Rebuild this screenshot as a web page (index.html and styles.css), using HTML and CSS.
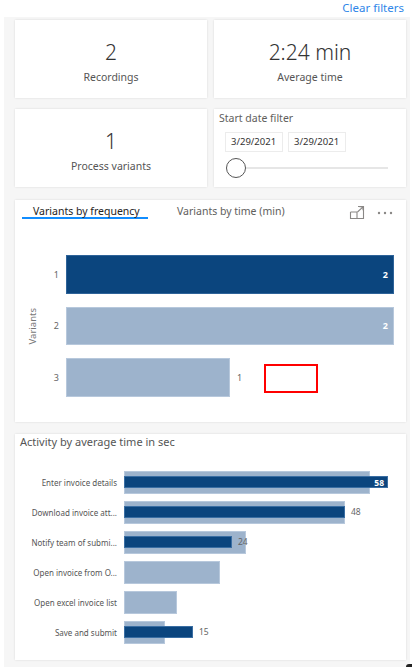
FILE: index.html
```html
<!DOCTYPE html>
<html>
<head>
<meta charset="utf-8">
<link rel="stylesheet" href="styles.css">
</head>
<body>
<div class="topbar"><span class="clear">Clear filters</span></div>
<div class="board">
  <div class="grid">
    <div class="card kpi"><div class="kval">2</div><div class="klabel">Recordings</div></div>
    <div class="card kpi"><div class="kval">2:24 min</div><div class="klabel">Average time</div></div>
    <div class="card kpi"><div class="kval">1</div><div class="klabel">Process variants</div></div>
    <div class="card filter">
      <div class="ftitle">Start date filter</div>
      <div class="dates"><div class="date">3/29/2021</div><div class="date">3/29/2021</div></div>
      <div class="slider"><div class="knob"></div><div class="track"></div></div>
    </div>
  </div>

  <div class="card variants">
    <div class="tabs">
      <div class="tab active">Variants by frequency</div>
      <div class="tab">Variants by time (min)</div>
      <div class="icons">
        <svg width="16" height="15" viewBox="0 0 16 15" fill="none" stroke="#8a8886" stroke-width="1.1">
          <path d="M9 1.5H14.5V13.5H1.5V7"/>
          <path d="M1.5 7H8V13.5"/>
          <path d="M8.5 7L14 1.8M10.5 1.8H14V5.3"/>
        </svg>
        <svg width="16" height="4" viewBox="0 0 16 4" fill="#8a8886">
          <circle cx="2" cy="2" r="1.2"/><circle cx="8" cy="2" r="1.2"/><circle cx="14" cy="2" r="1.2"/>
        </svg>
      </div>
    </div>
    <div class="vchart">
      <div class="vaxis"><span>Variants</span></div>
      <div class="vrows">
        <div class="vrow"><div class="vcat">1</div><div class="vplot"><div class="vbar dark full"><span class="inlabel">2</span></div></div></div>
        <div class="vrow"><div class="vcat">2</div><div class="vplot"><div class="vbar light full"><span class="inlabel">2</span></div></div></div>
        <div class="vrow"><div class="vcat">3</div><div class="vplot"><div class="vbar light half"></div><span class="outlabel">1</span></div></div>
      </div>
    </div>
    <div class="redbox"></div>
  </div>

  <div class="card activity">
    <div class="atitle">Activity by average time in sec</div>
    <div class="arows">
      <div class="arow"><div class="alabel">Enter invoice details</div><div class="aplot"><div class="lbar" style="width:246px"></div><div class="dbar" style="width:264px"><span class="din">58</span></div></div></div>
      <div class="arow"><div class="alabel">Download invoice att...</div><div class="aplot"><div class="lbar" style="width:221px"></div><div class="dbar" style="width:221px"></div><span class="dout" style="left:227px">48</span></div></div>
      <div class="arow"><div class="alabel">Notify team of submi...</div><div class="aplot"><div class="lbar" style="width:122px"></div><div class="dbar" style="width:108px"></div><span class="dout" style="left:114px">24</span></div></div>
      <div class="arow"><div class="alabel">Open invoice from O...</div><div class="aplot"><div class="lbar" style="width:96px"></div></div></div>
      <div class="arow"><div class="alabel">Open excel invoice list</div><div class="aplot"><div class="lbar" style="width:53px"></div></div></div>
      <div class="arow"><div class="alabel">Save and submit</div><div class="aplot"><div class="lbar" style="width:41px"></div><div class="dbar" style="width:69px"></div><span class="dout" style="left:75px">15</span></div></div>
    </div>
  </div>
</div>
<div class="corner"></div>
</body>
</html>
```
FILE: styles.css
```css
* { box-sizing: border-box; }
html, body { margin: 0; padding: 0; background: #fff; }
body {
  width: 412px;
  height: 667px;
  overflow: hidden;
  font-family: "Noto Sans", "Open Sans", sans-serif;
  color: #252423;
  position: relative;
}
.topbar {
  height: 17px;
  text-align: right;
  padding-right: 8px;
  line-height: 13px;
}
.clear {
  font-size: 11.5px;
  color: #2f86e8;
}
.board {
  margin: 0 2px 0 4px;
  background: #f6f6f6;
  padding: 3px 4px 8px 11px;
  height: 650px;
}
.card {
  background: #fff;
  box-shadow: 0 0 2px rgba(0,0,0,0.12);
}
.grid {
  display: grid;
  grid-template-columns: 192px 192px;
  column-gap: 7px;
  row-gap: 11px;
}
.kpi {
  height: 78px;
  display: flex;
  flex-direction: column;
  align-items: center;
  justify-content: center;
}
.kval {
  font-size: 21px;
  line-height: 26px;
  color: #333;
  font-weight: 300;
  margin-top: 4px;
}
.klabel {
  font-size: 10.5px;
  color: #555;
  margin-top: 5px;
}
.filter {
  height: 78px;
  padding: 2px 0 0 5px;
}
.ftitle {
  font-size: 10.5px;
  color: #605e5c;
  line-height: 15px;
}
.dates {
  display: flex;
  gap: 5px;
  margin: 6px 0 0 6px;
}
.date {
  width: 58px;
  height: 20px;
  border: 1px solid #ececec;
  font-size: 9.5px;
  line-height: 18px;
  padding-left: 5px;
  color: #333;
}
.slider {
  display: flex;
  align-items: center;
  margin: 6px 0 0 7px;
}
.knob {
  width: 20px;
  height: 20px;
  border-radius: 50%;
  border: 1.5px solid #555;
  background: #fff;
}
.track {
  width: 142px;
  height: 2px;
  background: #e6e6e6;
}
.variants {
  margin-top: 13px;
  height: 222px;
  position: relative;
}
.tabs {
  display: flex;
  align-items: flex-start;
  padding: 4px 0 0 7px;
  height: 21px;
}
.tab {
  font-size: 10.5px;
  color: #605e5c;
  line-height: 14px;
}
.tab.active {
  color: #252423;
  width: 126px;
  padding-left: 11px;
  height: 15px;
  border-bottom: 2px solid #118dff;
}
.tab:not(.active) { margin-left: 29px; }
.icons {
  margin-left: auto;
  margin-right: 13px;
  display: flex;
  align-items: center;
  gap: 12px;
  margin-top: 1px;
}
.vchart {
  display: flex;
  align-items: center;
  margin-top: 34px;
}
.vaxis {
  width: 34px;
  display: flex;
  justify-content: center;
}
.vaxis span {
  writing-mode: vertical-rl;
  transform: rotate(180deg);
  font-size: 9.5px;
  color: #777;
}
.vrows {
  display: flex;
  flex-direction: column;
  gap: 13px;
  flex: 1;
}
.vrow {
  display: flex;
  align-items: center;
  height: 38.5px;
}
.vcat {
  width: 17px;
  padding-right: 7px;
  text-align: right;
  font-size: 9px;
  color: #666;
}
.vplot {
  display: flex;
  align-items: center;
  height: 100%;
}
.vbar {
  height: 100%;
  display: flex;
  align-items: center;
  justify-content: flex-end;
}
.vbar.full { width: 328px; }
.vbar.half { width: 164px; }
.dark { background: #0b457e; border: 1px solid #2e6399; }
.light { background: #9db3cc; border: 1px solid #b7c8dc; }
.inlabel {
  color: #fff;
  font-size: 9px;
  font-weight: 700;
  padding-right: 5px;
}
.outlabel {
  font-size: 9px;
  color: #666;
  margin-left: 7px;
}
.redbox {
  position: absolute;
  left: 249px;
  top: 164px;
  width: 54px;
  height: 29px;
  border: 2px solid #ff0000;
}
.activity {
  margin-top: 12px;
  height: 226px;
  padding: 1px 0 0 5px;
}
.atitle {
  font-size: 11px;
  color: #555;
  line-height: 14px;
}
.arows {
  margin-top: 22px;
  display: flex;
  flex-direction: column;
  gap: 7px;
}
.arow {
  display: flex;
  align-items: center;
  height: 23px;
}
.alabel {
  width: 97px;
  text-align: right;
  font-size: 8px;
  color: #555;
  white-space: nowrap;
}
.aplot {
  margin-left: 7px;
  position: relative;
  height: 23px;
  flex: 1;
}
.lbar {
  height: 23px;
  background: #9db3cc;
  border: 1px solid #b7c8dc;
}
.dbar {
  position: absolute;
  left: 0;
  top: 5px;
  height: 12px;
  background: #0b457e;
  border: 1px solid #3a6ea3;
  display: flex;
  align-items: center;
  justify-content: flex-end;
}
.din {
  color: #fff;
  font-size: 8.5px;
  font-weight: 700;
  padding-right: 3px;
}
.dout {
  position: absolute;
  top: 5px;
  font-size: 8.5px;
  color: #666;
  line-height: 12px;
}
.corner {
  position: absolute;
  right: 0;
  bottom: 0;
  width: 6px;
  height: 3px;
  background: #222;
  border-top-left-radius: 4px;
}
```
